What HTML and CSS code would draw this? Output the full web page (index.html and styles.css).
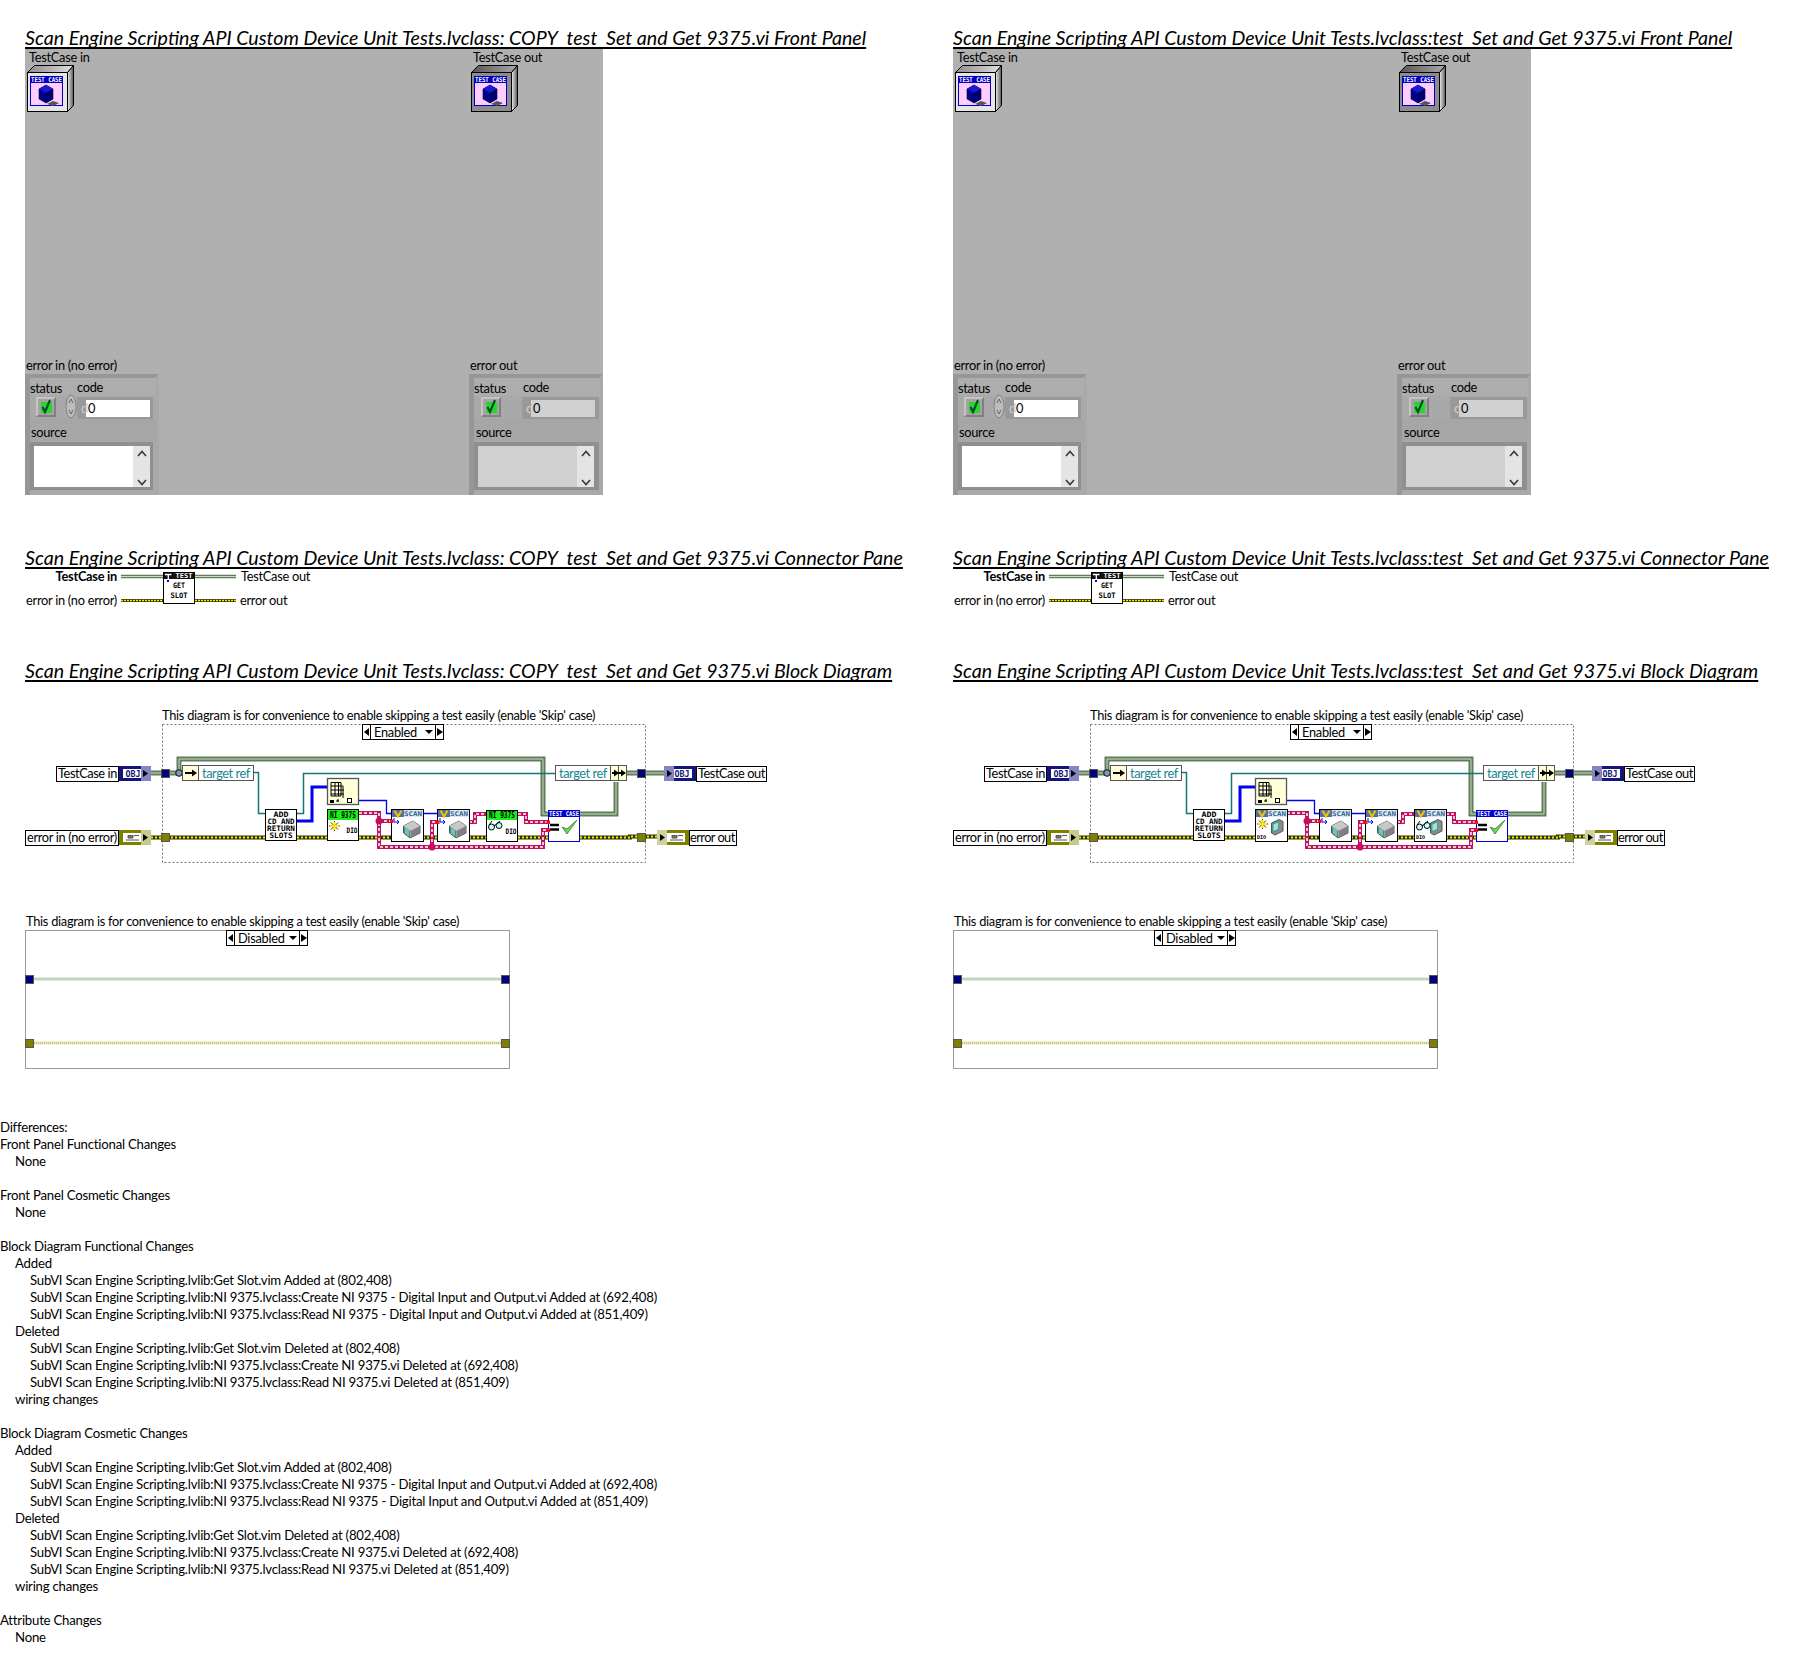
FILE: index.html
```html
<!DOCTYPE html>
<html lang="en">
<head>
<meta charset="utf-8">
<title>VI comparison</title>
<link rel="stylesheet" href="styles.css">
</head>
<body>
<svg class="sprites" aria-hidden="true">
  <defs>
    <linearGradient id="gTopIn" x1="0" y1="0" x2="1" y2="0"><stop offset="0" stop-color="#8a8a8a"/><stop offset="1" stop-color="#e0e0e0"/></linearGradient>
    <linearGradient id="gTopOut" x1="0" y1="0" x2="1" y2="0"><stop offset="0" stop-color="#555"/><stop offset="1" stop-color="#aaa"/></linearGradient>
    <linearGradient id="gSide" x1="0" y1="0" x2="1" y2="0"><stop offset="0" stop-color="#eee"/><stop offset="1" stop-color="#555"/></linearGradient>
    <g id="tcFace">
      <rect x="4.5" y="12.5" width="32" height="29" fill="#ffccff" stroke="#0000c0"/>
      <rect x="4" y="12" width="33" height="7" fill="#0000c0"/>
      <polygon points="33,39 27,42 21,40 27,37" fill="#555"/>
      <polygon points="13,25 20,21 27,25 27,35 20,39 13,35" fill="#00008c" stroke="#000030" stroke-width=".6"/>
      <polygon points="13,25 20,21 27,25 20,29" fill="#1a1ad0"/>
      <polygon points="20,29 27,25 27,35 20,39" fill="#00006a"/>
    </g>
    <g id="ctlIn">
      <polygon points="1.5,8.5 8.5,1.5 47.5,1.5 41.5,8.5" fill="url(#gTopIn)" stroke="#000"/>
      <polygon points="41.5,8.5 47.5,1.5 47.5,41.5 41.5,47.5" fill="url(#gSide)" stroke="#000"/>
      <rect x="1.5" y="8.5" width="40" height="39" fill="#e6e6e6" stroke="#000"/>
      <use href="#tcFace"/>
    </g>
    <g id="ctlOut">
      <polygon points="1.5,8.5 8.5,1.5 47.5,1.5 41.5,8.5" fill="url(#gTopOut)" stroke="#000"/>
      <polygon points="41.5,8.5 47.5,1.5 47.5,41.5 41.5,47.5" fill="url(#gSide)" stroke="#000"/>
      <rect x="1.5" y="8.5" width="40" height="39" fill="#8c8c8c" stroke="#000"/>
      <use href="#tcFace"/>
    </g>
    <g id="cluster">
      <rect x="0" y="0" width="134" height="121" fill="#a9a9a9"/>
      <polygon points="0,0 134,0 130,4 5,4 5,121 0,121" fill="#979797"/>
      <rect x="5" y="4" width="126" height="18" fill="#adadad"/>
      <rect x="5" y="45" width="126" height="22" fill="#a6a6a6"/>
    </g>
    <g id="check">
      <rect x="0" y="0" width="20" height="20" fill="#a4a4a4"/>
      <polygon points="0,0 20,0 18,2 2,2 2,18 0,20" fill="#c4c4c4"/>
      <polygon points="20,20 0,20 2,18 18,18 18,2 20,0" fill="#808080"/>
      <rect x="5" y="5" width="11" height="11" fill="#2bd62b"/>
      <path d="M6.500 10 L9 15 L14 3" fill="none" stroke="#043" stroke-width="2"/>
    </g>
    <g id="scroll">
      <rect x="0" y="0" width="17" height="41" fill="#e4e4e4"/>
      <path d="M5 10 L9 5.500 L13 10 M5 34 L9 38.500 L13 34" fill="none" stroke="#333" stroke-width="1.500"/>
    </g>
    <path id="wClsA" d="M151 773H179V759H543V814H548"/>
    <path id="wClsB" d="M580 814H616V782M627 773H664"/>
    <path id="wTeal" d="M254 772.500H258.500V813.500H265M297 813.500H303.500V773.500H555"/>
    <path id="wErr" d="M151 837.500H265M297 837.500H327M359 837.500H391M423 837.500H437M469 837.500H486M518 837.500H548M580 837.500H630V836.500H657"/>
    <path id="wRef" d="M359 813H379V847H543V830H548M379 821H391M432 847V822H437M469 822H475V814H486M518 814H526V822H548"/>
    <g id="device">
      <polygon points="0.500,6 10,1 17,6 17,13 7,18 0.500,13" fill="#a0a0a0" stroke="#555"/>
      <polygon points="0.500,6 10,1 17,6 7.500,10.500" fill="#c8c8c8"/>
      <polygon points="1,7 7,11 7,17 1,13" fill="#2a9c86"/>
      <path d="M3 8.500V14M5 9.500V15.500" stroke="#dff" stroke-width=".8"/>
      <polygon points="8,11 16.500,6.500 16.500,12.500 8,17" fill="#808080"/>
    </g>
    <g id="deviceTall">
      <polygon points="0.500,4 8,0.500 12,2.500 12,12 4,16 0.500,14" fill="#8c8c8c" stroke="#555"/>
      <polygon points="1,4.500 8,1 8,11 1,14" fill="#3d9d94"/>
      <polygon points="2.500,5.500 7,3.500 7,10 2.500,12" fill="#b0dcd6"/>
    </g>
    <g id="scanHead">
      <rect x="0" y="0" width="32" height="32" fill="#fff" stroke="#000"/>
      <rect x="0.500" y="0.500" width="31" height="7" fill="#dde8f2"/>
      <rect x="0.500" y="0.500" width="12" height="7" fill="#5470a8"/>
      <path d="M3 1L6.500 7L10 1" fill="none" stroke="#f2c200" stroke-width="2"/>
    </g>
    <g id="sparkle">
      <path d="M0 5H11M5.500 0V10M2 1.500L9 8.500M9 1.500L2 8.500" stroke="#000" stroke-width=".8"/>
      <path d="M1 5H10M5.500 1V9" stroke="#ffe800" stroke-width="2"/>
    </g>
    <g id="glasses">
      <circle cx="3.500" cy="6" r="3" fill="#bff" stroke="#000"/>
      <circle cx="11" cy="4.500" r="3" fill="#bff" stroke="#000"/>
      <path d="M6 4.500L8.500 3.500M1 4L4 0M9 2.500L12 0" stroke="#000" fill="none"/>
    </g>
    <g id="gridNode">
      <rect x="327.500" y="778.500" width="31" height="26" fill="#ffffd8" stroke="#555" stroke-width="1.300"/>
      <path d="M331 782.500H341M331 786H343V798M331 790H344M331 794H344M331 782.500V796H341V782.500M335 782.500V796M338.500 782.500V796" fill="none" stroke="#000"/>
      <rect x="330" y="800" width="4" height="3" fill="#000"/>
      <path d="M336 801H339M338 799V802" stroke="#000"/>
      <rect x="347.500" y="798.500" width="4" height="4" fill="#fff" stroke="#000"/>
    </g>
    <g id="bdCommon">
      <use href="#wClsA" class="cls-o"/><use href="#wClsB" class="cls-o"/>
      <use href="#wClsA" class="cls-i"/><use href="#wClsB" class="cls-i"/>
      <use href="#wTeal" class="teal"/>
      <path class="blue-thick" d="M297 821H312V787H327"/>
      <path class="blue-thin" d="M359 800.500H386.500V813.500H391M423 813.500H437"/>
      <use href="#wErr" class="err-o"/><use href="#wErr" class="err-i"/>
      <use href="#wRef" class="ref-o"/><use href="#wRef" class="ref-i"/>
      <circle cx="379" cy="821" r="3.500" fill="#c0105f"/>
      <circle cx="432" cy="847" r="3.500" fill="#c0105f"/>
      <rect class="frame-dash" x="162.500" y="724.500" width="483" height="138"/>
      <rect class="tun-n" x="161.500" y="769.500" width="8" height="8"/>
      <rect class="tun-n" x="637.500" y="769.500" width="8" height="8"/>
      <rect class="tun-o" x="161.500" y="833.500" width="8" height="8"/>
      <rect class="tun-o" x="637.500" y="833.500" width="8" height="8"/>
      <circle cx="179" cy="773" r="3.300" fill="#85a080" stroke="#000060"/>
      <rect class="node" x="182.500" y="765.500" width="71" height="15"/>
      <rect class="node-y" x="182.500" y="765.500" width="16" height="15"/>
      <path d="M185 773H193" stroke="#000" stroke-width="2"/><polygon points="192,769.500 197,773 192,776.500"/>
      <rect class="node" x="555.500" y="765.500" width="71" height="15"/>
      <rect class="node-y" x="610.500" y="765.500" width="8" height="15"/>
      <rect class="node-y" x="618.500" y="765.500" width="8" height="15"/>
      <path d="M612 773H624" stroke="#000" stroke-width="2"/><polygon points="614,769.500 619,773 614,776.500"/><polygon points="621,769.500 626,773 621,776.500"/>
      <rect class="sel" x="362.500" y="724.500" width="81" height="15"/>
      <path d="M370.500 724.500V739.500M435.500 724.500V739.500" stroke="#000"/>
      <polygon points="364,732 369,728 369,736"/><polygon points="443,732 437,728 437,736"/><polygon points="425,730 433,730 429,734"/>
      <rect x="119" y="766" width="32" height="15" fill="#14147a"/>
      <rect x="122.500" y="768.500" width="24" height="10" fill="#fff" stroke="#14147a"/>
      <rect x="141" y="766" width="10" height="15" fill="#8585c4"/>
      <polygon points="143,770 148,773.500 143,777"/>
      <rect x="664" y="766" width="32" height="15" fill="#14147a"/>
      <rect x="667.500" y="768.500" width="25" height="10" fill="#fff" stroke="#14147a"/>
      <rect x="664" y="766" width="10" height="15" fill="#8585c4"/>
      <polygon points="667,770 672,773.500 667,777"/>
      <rect x="119" y="830" width="32" height="15" fill="#808000"/>
      <rect x="122.500" y="832.500" width="24" height="10" fill="#fff" stroke="#808000"/>
      <rect x="141" y="830" width="10" height="15" fill="#c8c890"/>
      <polygon points="143,834 148,837.500 143,841"/>
      <path d="M128 835.500H133V838H128ZM134 835.500H139M126 840H139" stroke="#555" fill="#777"/>
      <rect x="657" y="830" width="32" height="15" fill="#808000"/>
      <rect x="660.500" y="832.500" width="25" height="10" fill="#fff" stroke="#808000"/>
      <rect x="657" y="830" width="10" height="15" fill="#d0d0a0"/>
      <polygon points="660,834 665,837.500 660,841"/>
      <path d="M672 835.500H677V838H672ZM678 835.500H683M670 840H683" stroke="#555" fill="#777"/>
      <rect class="box" x="56.500" y="766.500" width="62" height="15"/>
      <rect class="box" x="696.500" y="766.500" width="70" height="15"/>
      <rect class="box" x="25.500" y="830.500" width="93" height="15"/>
      <rect class="box" x="689.500" y="830.500" width="47" height="15"/>
      <rect class="box" x="265.500" y="809.500" width="31" height="31"/>
      <use href="#gridNode"/>
      <use href="#scanHead" x="391.500" y="809.500"/>
      <use href="#device" x="403" y="820"/>
      <path d="M394 818V822H399M397 820L399 822L397 824" fill="none" stroke="#00f"/>
      <use href="#scanHead" x="437.500" y="809.500"/>
      <use href="#device" x="449" y="820"/>
      <path d="M440 818V822H445M443 820L445 822L443 824" fill="none" stroke="#00f"/>
      <rect x="548.500" y="810.500" width="31" height="31" fill="#fff" stroke="#0000d0"/>
      <rect x="548" y="810" width="32" height="7" fill="#0000d0"/>
      <path d="M550 825H559M550 829.500H559" stroke="#000" stroke-width="2.500"/>
      <path d="M562 827L567 834L577 820L567 829Z" fill="#7ccc60" stroke="#3a9a4a"/>
      <rect class="dot" x="390" y="819.500" width="3.500" height="3.500"/>
      <rect class="dot" x="436" y="820.500" width="3.500" height="3.500"/>
      <rect class="dot" x="546.500" y="820.500" width="3.500" height="3.500"/>
      <rect class="dot" x="546.500" y="828.500" width="3.500" height="3.500"/>
    </g>
    <g id="niNodes">
      <rect x="327.500" y="809.500" width="31" height="31" fill="#fff" stroke="#000"/>
      <rect x="328" y="810" width="30" height="10" fill="#19f019"/>
      <use href="#sparkle" x="329" y="821"/>
      <rect x="486.500" y="810.500" width="31" height="31" fill="#fff" stroke="#000"/>
      <rect x="487" y="811" width="30" height="9" fill="#19f019"/>
      <use href="#glasses" x="488" y="821"/>
    </g>
    <g id="scanNodes">
      <use href="#scanHead" x="327.500" y="809.500"/>
      <use href="#sparkle" x="329" y="819"/>
      <use href="#deviceTall" x="343" y="819"/>
      <use href="#scanHead" x="486.500" y="809.500"/>
      <use href="#glasses" x="488" y="821"/>
      <use href="#deviceTall" x="502" y="819"/>
    </g>
    <g id="disabledCase">
      <rect class="frame-solid" x="25.500" y="930.500" width="484" height="138"/>
      <path class="pale-g" d="M34 979H501"/>
      <path class="pale-y" d="M34 1043H501"/>
      <path class="pale-y-i" d="M34 1043H501"/>
      <rect class="tun-n" x="25.500" y="975.500" width="8" height="8"/>
      <rect class="tun-n" x="501.500" y="975.500" width="8" height="8"/>
      <rect class="tun-o" x="25.500" y="1039.500" width="8" height="8"/>
      <rect class="tun-o" x="501.500" y="1039.500" width="8" height="8"/>
      <rect class="sel" x="226.500" y="930.500" width="81" height="15"/>
      <path d="M234.500 930.500V945.500M299.500 930.500V945.500" stroke="#000"/>
      <polygon points="228,938 233,934 233,942"/><polygon points="307,938 301,934 301,942"/><polygon points="289,936 297,936 293,940"/>
    </g>
    <g id="conn">
      <path class="c-cls-o" d="M121 576.500H163M195 576.500H236"/>
      <path class="c-cls-i" d="M121 576.500H163M195 576.500H236"/>
      <path class="c-err-o" d="M121 600.500H163M195 600.500H236"/>
      <path class="c-err-i" d="M121 600.500H163M195 600.500H236"/>
      <rect x="163.500" y="572.500" width="31" height="31" fill="#fff" stroke="#000"/>
      <rect x="164" y="573" width="30" height="6" fill="#111"/>
      <path d="M165 574.500H171.500M168.300 574.500V581" stroke="#fff" stroke-width="1.300"/>
      <path d="M168 580V582" stroke="#00f" stroke-width="2"/>
    </g>
  </defs>
</svg>

<main class="compare">
  <section class="col">
    <h2 class="title">Scan Engine Scripting API Custom Device Unit Tests.lvclass: COPY_test_Set and Get 9375.vi Front Panel</h2>
    <svg class="fp" viewBox="25 49 578 446">
      <rect x="25" y="49" width="578" height="446" fill="#b0b0b0"/>
      <text class="lb" x="29" y="62">TestCase in</text>
      <text class="lb" x="473" y="62">TestCase out</text>
      <use href="#ctlIn" x="26" y="64"/>
      <text class="px-w" x="46.500" y="82" text-anchor="middle" textLength="31" lengthAdjust="spacingAndGlyphs">TEST CASE</text>
      <use href="#ctlOut" x="470" y="64"/>
      <text class="px-w" x="490.500" y="82" text-anchor="middle" textLength="31" lengthAdjust="spacingAndGlyphs">TEST CASE</text>
      <text class="lb" x="26" y="370">error in (no error)</text>
      <text class="lb" x="470" y="370">error out</text>
      <use href="#cluster" x="25" y="374"/>
      <use href="#cluster" x="469" y="374"/>
      <text class="lb" x="30" y="393">status</text>
      <text class="lb" x="77" y="392">code</text>
      <use href="#check" x="36" y="397"/>
      <ellipse cx="71" cy="406.500" rx="5" ry="11.500" fill="#bcbcbc" stroke="#808080"/>
      <path d="M69 403L71 399L73 403M69 410L71 414L73 410" fill="none" stroke="#666"/>
      <rect x="77" y="397" width="76" height="22" fill="#999"/>
      <rect x="86" y="400" width="64" height="17" fill="#fff"/>
      <text class="lb-d" x="81" y="413">d</text>
      <text class="lb" x="88" y="413">0</text>
      <text class="lb" x="31" y="437">source</text>
      <rect x="30" y="442" width="123" height="48" fill="#8f8f8f"/>
      <rect x="34" y="446" width="116" height="41" fill="#fff"/>
      <use href="#scroll" x="133" y="446"/>
      <text class="lb" x="474" y="393">status</text>
      <text class="lb" x="523" y="392">code</text>
      <use href="#check" x="481" y="397"/>
      <rect x="522" y="397" width="77" height="22" fill="#999"/>
      <rect x="531" y="400" width="64" height="17" fill="#d0d0d0"/>
      <text class="lb-d" x="526" y="413">d</text>
      <text class="lb" x="533" y="413">0</text>
      <text class="lb" x="476" y="437">source</text>
      <rect x="474" y="442" width="125" height="48" fill="#8f8f8f"/>
      <rect x="478" y="446" width="99" height="41" fill="#d0d0d0"/>
      <use href="#scroll" x="577" y="446"/>
    </svg>

    <h2 class="title title-conn">Scan Engine Scripting API Custom Device Unit Tests.lvclass: COPY_test_Set and Get 9375.vi Connector Pane</h2>
    <svg class="cp" viewBox="25 564 300 46">
      <use href="#conn"/>
      <text class="px-w" x="184" y="578" text-anchor="middle" textLength="17" lengthAdjust="spacingAndGlyphs">TEST</text>
      <text class="px" x="179" y="588" text-anchor="middle" textLength="12" lengthAdjust="spacingAndGlyphs">GET</text>
      <text class="px" x="179" y="598" text-anchor="middle" textLength="17" lengthAdjust="spacingAndGlyphs">SLOT</text>
      <text class="lb lb-b" x="117" y="581" text-anchor="end">TestCase in</text>
      <text class="lb" x="241" y="581">TestCase out</text>
      <text class="lb" x="117" y="605" text-anchor="end">error in (no error)</text>
      <text class="lb" x="240" y="605">error out</text>
    </svg>

    <h2 class="title title-bd">Scan Engine Scripting API Custom Device Unit Tests.lvclass: COPY_test_Set and Get 9375.vi Block Diagram</h2>
    <svg class="bd" viewBox="25 683 780 187">
      <use href="#bdCommon"/>
      <use href="#niNodes"/>
      <text class="lb" x="162" y="720">This diagram is for convenience to enable skipping a test easily (enable 'Skip' case)</text>
      <text class="lb" x="374" y="737">Enabled</text>
      <text class="lb lb-t" x="202" y="778" textLength="48">target ref</text>
      <text class="lb lb-t" x="559" y="778" textLength="48">target ref</text>
      <text class="lb" x="58" y="778" textLength="59">TestCase in</text>
      <text class="lb" x="698" y="778" textLength="67">TestCase out</text>
      <text class="lb" x="27" y="842" textLength="90">error in (no error)</text>
      <text class="lb" x="690" y="842" textLength="45">error out</text>
      <text class="px-b" x="133" y="776.500" text-anchor="middle" textLength="15" lengthAdjust="spacingAndGlyphs">OBJ</text>
      <text class="px-b" x="682" y="776.500" text-anchor="middle" textLength="15" lengthAdjust="spacingAndGlyphs">OBJ</text>
      <text class="px" x="281" y="817" text-anchor="middle" textLength="15" lengthAdjust="spacingAndGlyphs">ADD</text>
      <text class="px" x="281" y="824" text-anchor="middle" textLength="27" lengthAdjust="spacingAndGlyphs">CD AND</text>
      <text class="px" x="281" y="831" text-anchor="middle" textLength="28" lengthAdjust="spacingAndGlyphs">RETURN</text>
      <text class="px" x="281" y="838" text-anchor="middle" textLength="23" lengthAdjust="spacingAndGlyphs">SLOTS</text>
      <text class="px px-g" x="343" y="818" text-anchor="middle" textLength="26" lengthAdjust="spacingAndGlyphs">NI 9375</text>
      <text class="px" x="352" y="833" text-anchor="middle" textLength="11" lengthAdjust="spacingAndGlyphs">DIO</text>
      <text class="px px-g" x="502" y="818" text-anchor="middle" textLength="26" lengthAdjust="spacingAndGlyphs">NI 9375</text>
      <text class="px" x="511" y="834" text-anchor="middle" textLength="11" lengthAdjust="spacingAndGlyphs">DIO</text>
      <text class="px-s" x="413" y="816" text-anchor="middle" textLength="18" lengthAdjust="spacingAndGlyphs">SCAN</text>
      <text class="px-s" x="459" y="816" text-anchor="middle" textLength="18" lengthAdjust="spacingAndGlyphs">SCAN</text>
      <text class="px-w" x="564" y="816" text-anchor="middle" textLength="30" lengthAdjust="spacingAndGlyphs">TEST CASE</text>
    </svg>

    <svg class="dis" viewBox="25 910 780 160">
      <use href="#disabledCase"/>
      <text class="lb" x="26" y="926">This diagram is for convenience to enable skipping a test easily (enable 'Skip' case)</text>
      <text class="lb" x="238" y="943">Disabled</text>
    </svg>
  </section>

  <section class="col">
    <h2 class="title">Scan Engine Scripting API Custom Device Unit Tests.lvclass:test_Set and Get 9375.vi Front Panel</h2>
    <svg class="fp" viewBox="25 49 578 446">
      <rect x="25" y="49" width="578" height="446" fill="#b0b0b0"/>
      <text class="lb" x="29" y="62">TestCase in</text>
      <text class="lb" x="473" y="62">TestCase out</text>
      <use href="#ctlIn" x="26" y="64"/>
      <text class="px-w" x="46.500" y="82" text-anchor="middle" textLength="31" lengthAdjust="spacingAndGlyphs">TEST CASE</text>
      <use href="#ctlOut" x="470" y="64"/>
      <text class="px-w" x="490.500" y="82" text-anchor="middle" textLength="31" lengthAdjust="spacingAndGlyphs">TEST CASE</text>
      <text class="lb" x="26" y="370">error in (no error)</text>
      <text class="lb" x="470" y="370">error out</text>
      <use href="#cluster" x="25" y="374"/>
      <use href="#cluster" x="469" y="374"/>
      <text class="lb" x="30" y="393">status</text>
      <text class="lb" x="77" y="392">code</text>
      <use href="#check" x="36" y="397"/>
      <ellipse cx="71" cy="406.500" rx="5" ry="11.500" fill="#bcbcbc" stroke="#808080"/>
      <path d="M69 403L71 399L73 403M69 410L71 414L73 410" fill="none" stroke="#666"/>
      <rect x="77" y="397" width="76" height="22" fill="#999"/>
      <rect x="86" y="400" width="64" height="17" fill="#fff"/>
      <text class="lb-d" x="81" y="413">d</text>
      <text class="lb" x="88" y="413">0</text>
      <text class="lb" x="31" y="437">source</text>
      <rect x="30" y="442" width="123" height="48" fill="#8f8f8f"/>
      <rect x="34" y="446" width="116" height="41" fill="#fff"/>
      <use href="#scroll" x="133" y="446"/>
      <text class="lb" x="474" y="393">status</text>
      <text class="lb" x="523" y="392">code</text>
      <use href="#check" x="481" y="397"/>
      <rect x="522" y="397" width="77" height="22" fill="#999"/>
      <rect x="531" y="400" width="64" height="17" fill="#d0d0d0"/>
      <text class="lb-d" x="526" y="413">d</text>
      <text class="lb" x="533" y="413">0</text>
      <text class="lb" x="476" y="437">source</text>
      <rect x="474" y="442" width="125" height="48" fill="#8f8f8f"/>
      <rect x="478" y="446" width="99" height="41" fill="#d0d0d0"/>
      <use href="#scroll" x="577" y="446"/>
    </svg>

    <h2 class="title title-conn">Scan Engine Scripting API Custom Device Unit Tests.lvclass:test_Set and Get 9375.vi Connector Pane</h2>
    <svg class="cp" viewBox="25 564 300 46">
      <use href="#conn"/>
      <text class="px-w" x="184" y="578" text-anchor="middle" textLength="17" lengthAdjust="spacingAndGlyphs">TEST</text>
      <text class="px" x="179" y="588" text-anchor="middle" textLength="12" lengthAdjust="spacingAndGlyphs">GET</text>
      <text class="px" x="179" y="598" text-anchor="middle" textLength="17" lengthAdjust="spacingAndGlyphs">SLOT</text>
      <text class="lb lb-b" x="117" y="581" text-anchor="end">TestCase in</text>
      <text class="lb" x="241" y="581">TestCase out</text>
      <text class="lb" x="117" y="605" text-anchor="end">error in (no error)</text>
      <text class="lb" x="240" y="605">error out</text>
    </svg>

    <h2 class="title title-bd">Scan Engine Scripting API Custom Device Unit Tests.lvclass:test_Set and Get 9375.vi Block Diagram</h2>
    <svg class="bd" viewBox="25 683 780 187">
      <use href="#bdCommon"/>
      <use href="#scanNodes"/>
      <text class="lb" x="162" y="720">This diagram is for convenience to enable skipping a test easily (enable 'Skip' case)</text>
      <text class="lb" x="374" y="737">Enabled</text>
      <text class="lb lb-t" x="202" y="778" textLength="48">target ref</text>
      <text class="lb lb-t" x="559" y="778" textLength="48">target ref</text>
      <text class="lb" x="58" y="778" textLength="59">TestCase in</text>
      <text class="lb" x="698" y="778" textLength="67">TestCase out</text>
      <text class="lb" x="27" y="842" textLength="90">error in (no error)</text>
      <text class="lb" x="690" y="842" textLength="45">error out</text>
      <text class="px-b" x="133" y="776.500" text-anchor="middle" textLength="15" lengthAdjust="spacingAndGlyphs">OBJ</text>
      <text class="px-b" x="682" y="776.500" text-anchor="middle" textLength="15" lengthAdjust="spacingAndGlyphs">OBJ</text>
      <text class="px" x="281" y="817" text-anchor="middle" textLength="15" lengthAdjust="spacingAndGlyphs">ADD</text>
      <text class="px" x="281" y="824" text-anchor="middle" textLength="27" lengthAdjust="spacingAndGlyphs">CD AND</text>
      <text class="px" x="281" y="831" text-anchor="middle" textLength="28" lengthAdjust="spacingAndGlyphs">RETURN</text>
      <text class="px" x="281" y="838" text-anchor="middle" textLength="23" lengthAdjust="spacingAndGlyphs">SLOTS</text>
      <text class="px-s" x="349" y="816" text-anchor="middle" textLength="18" lengthAdjust="spacingAndGlyphs">SCAN</text>
      <text class="px-t" x="329" y="839" textLength="9" lengthAdjust="spacingAndGlyphs">DIO</text>
      <text class="px-s" x="413" y="816" text-anchor="middle" textLength="18" lengthAdjust="spacingAndGlyphs">SCAN</text>
      <text class="px-s" x="459" y="816" text-anchor="middle" textLength="18" lengthAdjust="spacingAndGlyphs">SCAN</text>
      <text class="px-s" x="508" y="816" text-anchor="middle" textLength="18" lengthAdjust="spacingAndGlyphs">SCAN</text>
      <text class="px-t" x="488" y="839" textLength="9" lengthAdjust="spacingAndGlyphs">DIO</text>
      <text class="px-w" x="564" y="816" text-anchor="middle" textLength="30" lengthAdjust="spacingAndGlyphs">TEST CASE</text>
    </svg>

    <svg class="dis" viewBox="25 910 780 160">
      <use href="#disabledCase"/>
      <text class="lb" x="26" y="926">This diagram is for convenience to enable skipping a test easily (enable 'Skip' case)</text>
      <text class="lb" x="238" y="943">Disabled</text>
    </svg>
  </section>
</main>

<section class="diff">
  <p>Differences:</p>
  <p>Front Panel Functional Changes</p>
  <p class="l1">None</p>
  <p class="gap">Front Panel Cosmetic Changes</p>
  <p class="l1">None</p>
  <p class="gap">Block Diagram Functional Changes</p>
  <p class="l1">Added</p>
  <p class="l2">SubVI Scan Engine Scripting.lvlib:Get Slot.vim Added at (802,408)</p>
  <p class="l2">SubVI Scan Engine Scripting.lvlib:NI 9375.lvclass:Create NI 9375 - Digital Input and Output.vi Added at (692,408)</p>
  <p class="l2">SubVI Scan Engine Scripting.lvlib:NI 9375.lvclass:Read NI 9375 - Digital Input and Output.vi Added at (851,409)</p>
  <p class="l1">Deleted</p>
  <p class="l2">SubVI Scan Engine Scripting.lvlib:Get Slot.vim Deleted at (802,408)</p>
  <p class="l2">SubVI Scan Engine Scripting.lvlib:NI 9375.lvclass:Create NI 9375.vi Deleted at (692,408)</p>
  <p class="l2">SubVI Scan Engine Scripting.lvlib:NI 9375.lvclass:Read NI 9375.vi Deleted at (851,409)</p>
  <p class="l1">wiring changes</p>
  <p class="gap">Block Diagram Cosmetic Changes</p>
  <p class="l1">Added</p>
  <p class="l2">SubVI Scan Engine Scripting.lvlib:Get Slot.vim Added at (802,408)</p>
  <p class="l2">SubVI Scan Engine Scripting.lvlib:NI 9375.lvclass:Create NI 9375 - Digital Input and Output.vi Added at (692,408)</p>
  <p class="l2">SubVI Scan Engine Scripting.lvlib:NI 9375.lvclass:Read NI 9375 - Digital Input and Output.vi Added at (851,409)</p>
  <p class="l1">Deleted</p>
  <p class="l2">SubVI Scan Engine Scripting.lvlib:Get Slot.vim Deleted at (802,408)</p>
  <p class="l2">SubVI Scan Engine Scripting.lvlib:NI 9375.lvclass:Create NI 9375.vi Deleted at (692,408)</p>
  <p class="l2">SubVI Scan Engine Scripting.lvlib:NI 9375.lvclass:Read NI 9375.vi Deleted at (851,409)</p>
  <p class="l1">wiring changes</p>
  <p class="gap">Attribute Changes</p>
  <p class="l1">None</p>
</section>
</body>
</html>
```
FILE: styles.css
```css
html, body { margin: 0; padding: 0; background: #fff; color: #000; }
body { font-family: Lato, "Liberation Sans", sans-serif; }

.sprites { position: absolute; width: 0; height: 0; overflow: hidden; }

.compare {
  display: grid;
  grid-template-columns: 928px 1fr;
  padding: 26px 0 0 25px;
}
.col { display: flex; flex-direction: column; align-items: flex-start; }

.title {
  margin: 0;
  font-size: 19.6px;
  line-height: 23px;
  height: 23px;
  font-weight: 400;
  font-style: italic;
  letter-spacing: 0;
  white-space: nowrap;
  text-decoration: underline;
  text-decoration-thickness: 2px;
  text-underline-offset: 2px;
  text-decoration-skip-ink: none;
}
.title-conn { margin-top: 51px; }
.title-bd { margin-top: 49px; height: 24px; }

.fp { display: block; width: 578px; height: 446px; }
.cp { display: block; width: 300px; height: 46px; margin-top: -5px; }
.bd { display: block; width: 780px; height: 187px; }
.dis { display: block; width: 780px; height: 160px; margin-top: 40px; }

.lb { font-family: Lato, "Liberation Sans", sans-serif; font-size: 12.8px; letter-spacing: -0.27px; fill: #000; }
.lb-b { font-weight: 700; }
.lb-t { fill: #14858f; }
.lb-d { font-family: Lato, sans-serif; font-size: 13px; fill: #ccc; }
.px, .px-w, .px-b, .px-s, .px-t { font-family: "DejaVu Sans Mono", monospace; font-weight: 700; font-size: 7.5px; }
.px { fill: #000; }
.px-g { font-size: 8.5px; }
.px-w { fill: #fff; font-size: 6.5px; }
.px-b { fill: #14147a; font-size: 8px; }
.px-s { fill: #31658f; font-size: 6.5px; }
.px-t { font-size: 5px; fill: #000; }

.cls-o { fill: none; stroke: #5f7d59; stroke-width: 5; }
.cls-i { fill: none; stroke: #cfdbc9; stroke-width: 1; }
.teal { fill: none; stroke: #0d7a78; stroke-width: 1.5; }
.blue-thick { fill: none; stroke: #0000f0; stroke-width: 3; }
.blue-thin { fill: none; stroke: #0000f0; stroke-width: 1.3; }
.err-o { fill: none; stroke: #333300; stroke-width: 4; }
.err-i { fill: none; stroke: #f0f000; stroke-width: 2; stroke-dasharray: 2 2; }
.ref-o { fill: none; stroke: #c0105f; stroke-width: 4; }
.ref-i { fill: none; stroke: #fff; stroke-width: 1.5; stroke-dasharray: 3 2; }
.frame-dash { fill: none; stroke: #777; stroke-width: 1; stroke-dasharray: 2 2; }
.frame-solid { fill: #fff; stroke: #999; stroke-width: 1; }
.tun-n { fill: #000080; stroke: #555; stroke-width: 1; }
.tun-o { fill: #808000; stroke: #555; stroke-width: 1; }
.node { fill: #fff; stroke: #555; stroke-width: 1; }
.node-y { fill: #ffffd8; stroke: #555; stroke-width: 1; }
.sel { fill: #fff; stroke: #000; stroke-width: 1; }
.box { fill: #fff; stroke: #000; stroke-width: 1; }
.dot { fill: #f01020; }
.pale-g { fill: none; stroke: #c3d3bf; stroke-width: 3; }
.pale-y { fill: none; stroke: #e8e8b0; stroke-width: 3; }
.pale-y-i { fill: none; stroke: #a0a070; stroke-width: 1; stroke-dasharray: 1 1; }
.c-cls-o { fill: none; stroke: #5f7d59; stroke-width: 3.5; }
.c-cls-i { fill: none; stroke: #cfdbc9; stroke-width: 1; }
.c-err-o { fill: none; stroke: #333300; stroke-width: 3; }
.c-err-i { fill: none; stroke: #f0f000; stroke-width: 1.5; stroke-dasharray: 2 1; }

.diff { margin-top: 48.5px; font-size: 13.2px; line-height: 17px; letter-spacing: -0.22px; }
.diff p { margin: 0; }
.diff .l1 { padding-left: 15px; }
.diff .l2 { padding-left: 30px; }
.diff .gap { margin-top: 17px; }
```
